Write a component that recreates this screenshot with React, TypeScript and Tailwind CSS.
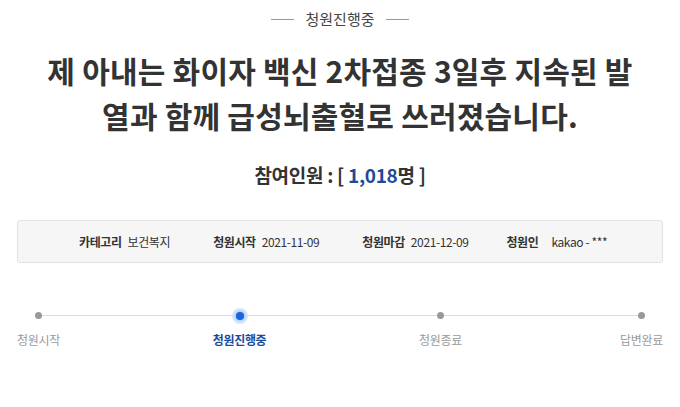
import React from "react";

const font = { fontFamily: '"Noto Sans CJK KR", "Noto Sans", sans-serif' };

export default function App() {
  const steps = [
    { label: "청원시작", active: false },
    { label: "청원진행중", active: true },
    { label: "청원종료", active: false },
    { label: "답변완료", active: false },
  ];
  return (
    <div className="w-[680px] h-[407px] bg-white overflow-hidden flex flex-col items-center" style={font}>
      <div className="mt-[7px] flex items-center gap-[11px] text-[15px] leading-[24px] text-[#444]">
        <span className="block w-[23px] h-px bg-[#999]" />
        <span>청원진행중</span>
        <span className="block w-[23px] h-px bg-[#999]" />
      </div>
      <h1 className="mt-[17px] text-center font-bold text-[30px] leading-[45px] text-[#333] tracking-[0.2px]">
        제 아내는 화이자 백신 2차접종 3일후 지속된 발
        <br />
        열과 함께 급성뇌출혈로 쓰러졌습니다.
      </h1>
      <div className="mt-[24px] text-[19px] leading-[26px] font-bold text-[#333] tracking-[-0.3px]">
        참여인원 : [ <span className="text-[#1c4b9c]">1,018</span>명 ]
      </div>
      <div className="mt-[32px] w-[646px] h-[43px] rounded-[3px] border border-[#e2e2e2] bg-[#f6f6f6] flex items-center pl-[61px] text-[12px] text-[#333] tracking-[-0.4px]">
        <span className="font-bold">카테고리</span>
        <span className="ml-[6px]">보건복지</span>
        <span className="ml-[43px] font-bold">청원시작</span>
        <span className="ml-[6px]">2021-11-09</span>
        <span className="ml-[43px] font-bold">청원마감</span>
        <span className="ml-[6px]">2021-12-09</span>
        <span className="ml-[38px] font-bold">청원인</span>
        <span className="ml-[13px]">kakao - ***</span>
      </div>
      <div className="relative mt-[44px] w-[647px] flex justify-between">
        <div className="absolute left-[21px] right-[21px] top-[8px] h-px bg-[#dcdcdc]" />
        {steps.map((s) => (
          <div key={s.label} className="relative w-[44px] flex flex-col items-center">
            <div className="h-[17px] w-[17px] flex items-center justify-center">
              {s.active ? (
                <div className="h-[16px] w-[16px] rounded-full bg-[#d6e6fb] flex items-center justify-center">
                  <div className="h-[8px] w-[8px] rounded-full bg-[#1a66d6] shadow-[0_0_3px_#5a9cf0]" />
                </div>
              ) : (
                <div className="h-[7px] w-[7px] rounded-full bg-[#999]" />
              )}
            </div>
            <div
              className={
                "mt-[7px] whitespace-nowrap text-[12px] leading-[18px] tracking-[-0.3px] " +
                (s.active ? "font-bold text-[#1c4b9c]" : "text-[#999]")
              }
            >
              {s.label}
            </div>
          </div>
        ))}
      </div>
    </div>
  );
}
